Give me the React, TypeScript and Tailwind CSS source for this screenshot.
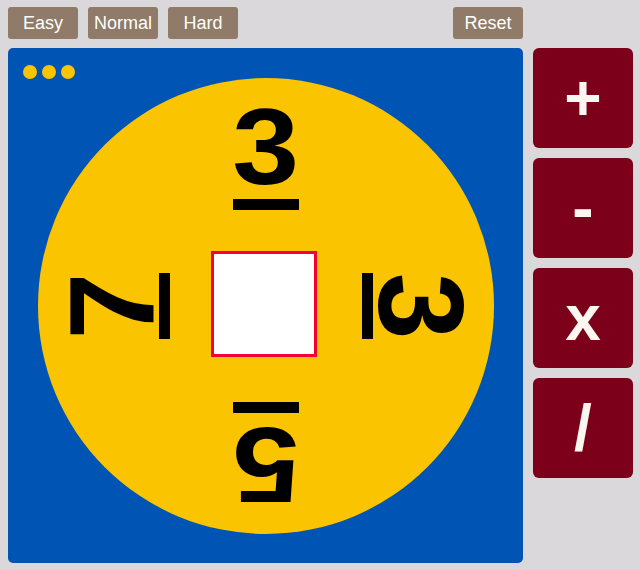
const levels = ["Easy", "Normal", "Hard"];
const ops = ["+", "-", "x", "/"];

const cards = [
  { digit: "3", rot: "rotate-0", side: false },
  { digit: "3", rot: "rotate-[90deg]", side: true },
  { digit: "5", rot: "rotate-[180deg]", side: false },
  { digit: "7", rot: "rotate-[270deg]", side: true },
];

function TopButton({ label }: { label: string }) {
  return (
    <button className="flex h-[32px] w-[70px] items-center justify-center rounded-[3px] bg-[#8f7b68] text-[18px] text-white">
      {label}
    </button>
  );
}

function Number({ digit, rot, side }: { digit: string; rot: string; side: boolean }) {
  return (
    <div className={`absolute left-1/2 top-1/2 h-0 w-0 ${rot}`}>
      <div className="absolute bottom-[96px] left-[-50px] flex w-[100px] flex-col items-center">
        <div
          className={
            side
              ? "text-[120px] font-bold leading-[100px] text-black"
              : "origin-top scale-y-90 text-[120px] font-bold leading-[100px] text-black"
          }
        >
          {digit}
        </div>
        <div className="-mt-[2px] h-[11px] w-[66px] bg-black" />
      </div>
    </div>
  );
}

export default function App() {
  return (
    <div className="h-[570px] w-[640px] overflow-hidden bg-[#dad8db] pl-2 pt-[7px] font-['Liberation_Sans',Arial,sans-serif]">
      <div className="flex w-[515px] justify-between">
        <div className="flex gap-[10px]">
          {levels.map((l) => (
            <TopButton key={l} label={l} />
          ))}
        </div>
        <TopButton label="Reset" />
      </div>

      <div className="mt-[9px] flex gap-[10px]">
        <div className="relative flex h-[515px] w-[515px] items-center justify-center rounded-[5px] bg-[#0054b4]">
          <div className="absolute left-[15px] top-[17px] flex gap-[5px]">
            <span className="h-[14px] w-[14px] rounded-full bg-[#fbc400]" />
            <span className="h-[14px] w-[14px] rounded-full bg-[#fbc400]" />
            <span className="h-[14px] w-[14px] rounded-full bg-[#fbc400]" />
          </div>
          <div className="relative flex h-[456px] w-[456px] items-center justify-center rounded-full bg-[#fbc400]">
            <div className="mb-[3px] mr-[3px] h-[106px] w-[106px] border-[3px] border-[#f50035] bg-white" />
            {cards.map((c, i) => (
              <Number key={i} digit={c.digit} rot={c.rot} side={c.side} />
            ))}
          </div>
        </div>

        <div className="flex flex-col gap-[10px]">
          {ops.map((o) => (
            <button
              key={o}
              className="flex h-[100px] w-[100px] items-center justify-center rounded-[6px] bg-[#7d001b] text-[64px] font-bold leading-none text-[#faf6f0]"
            >
              {o}
            </button>
          ))}
        </div>
      </div>
    </div>
  );
}
